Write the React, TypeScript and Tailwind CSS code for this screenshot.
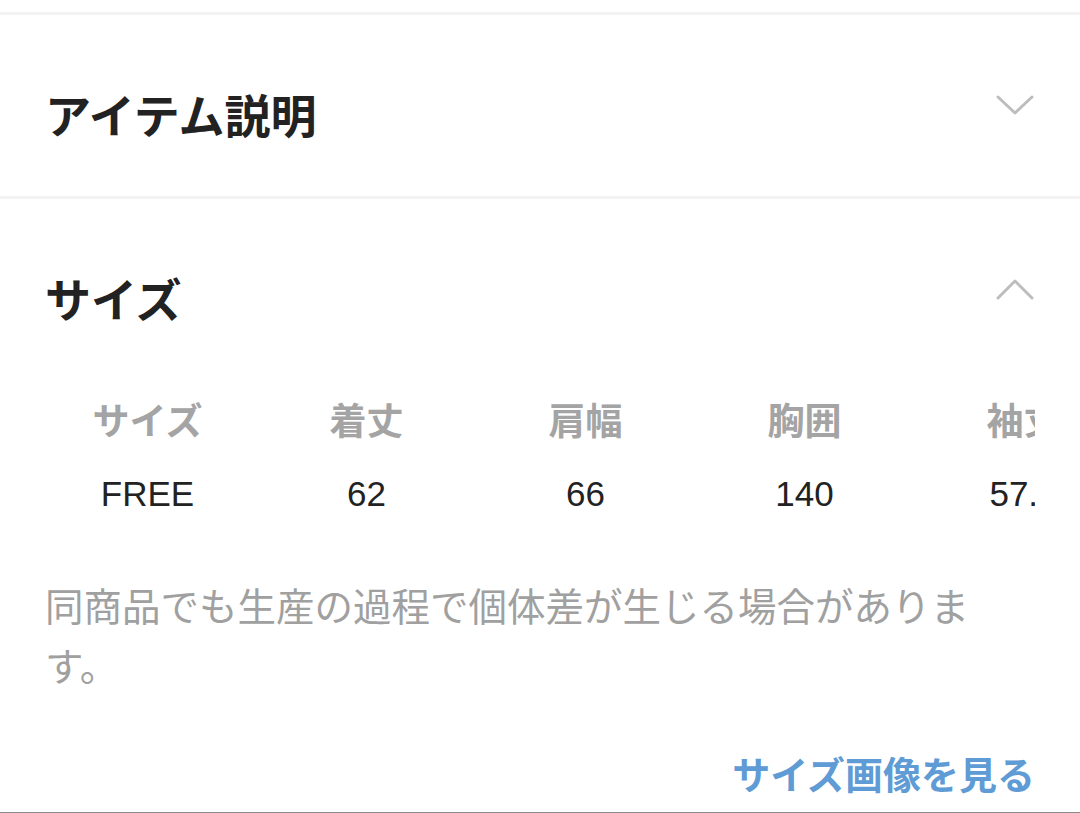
const jp = '"Noto Sans CJK JP", sans-serif';
const latin = '"Liberation Sans", "Noto Sans CJK JP", sans-serif';

const sizeRows = [
  { label: 'サイズ', value: 'FREE' },
  { label: '着丈', value: '62' },
  { label: '肩幅', value: '66' },
  { label: '胸囲', value: '140' },
  { label: '袖丈', value: '57.5' },
];

function Chevron({ up }: { up?: boolean }) {
  return (
    <svg width="40" height="24" viewBox="0 0 40 24" className="shrink-0">
      <path
        d={up ? 'M3 21 L20 4 L37 21' : 'M3 4 L20 20 L37 4'}
        fill="none"
        stroke="#bdbdbd"
        strokeWidth="3"
        strokeLinecap="round"
        strokeLinejoin="round"
      />
    </svg>
  );
}

function SectionHeader({ title, open }: { title: string; open?: boolean }) {
  return (
    <div className="flex items-start justify-between px-[45px] pt-[70px]">
      <h2 className="text-[46px] leading-[56px] font-bold text-[#222]" style={{ fontFamily: jp }}>
        {title}
      </h2>
      <div className="mt-[8px]">
        <Chevron up={open} />
      </div>
    </div>
  );
}

export default function App() {
  return (
    <div className="w-[1080px] h-[813px] bg-white overflow-hidden border-b border-[#8a8a8a]" style={{ fontFamily: jp }}>
      <div className="h-[12px]" />
      <div className="h-[3px] bg-[#f3f3f3]" />

      {/* アイテム説明 (closed) */}
      <div className="pb-[55px]">
        <SectionHeader title="アイテム説明" />
      </div>

      <div className="h-[3px] bg-[#f3f3f3]" />

      {/* サイズ (open) */}
      <SectionHeader title="サイズ" open />

      <div className="px-[45px]">
        {/* table is wider than the screen, last column cut at the edge */}
        <div className="mt-[68px] -ml-[7px] w-[997px] overflow-hidden">
          <div className="flex">
            {sizeRows.map((row) => (
              <div key={row.label} className="w-[219px] shrink-0 flex flex-col items-center">
                <div className="text-[37px] leading-[52px] font-bold text-[#a4a4a4] whitespace-nowrap">
                  {row.label}
                </div>
                <div
                  className="mt-[23px] text-[35px] leading-[52px] text-[#222] whitespace-nowrap"
                  style={{ fontFamily: latin }}
                >
                  {row.value}
                </div>
              </div>
            ))}
          </div>
        </div>

        <p className="mt-[54px] text-[38.5px] leading-[60px] text-[#a0a0a0]">
          同商品でも生産の過程で個体差が生じる場合があります。
        </p>

        <div className="mt-[55px] flex justify-end">
          <span className="text-[38px] leading-[48px] font-bold text-[#5f9bd4]">サイズ画像を見る</span>
        </div>
      </div>
    </div>
  );
}
